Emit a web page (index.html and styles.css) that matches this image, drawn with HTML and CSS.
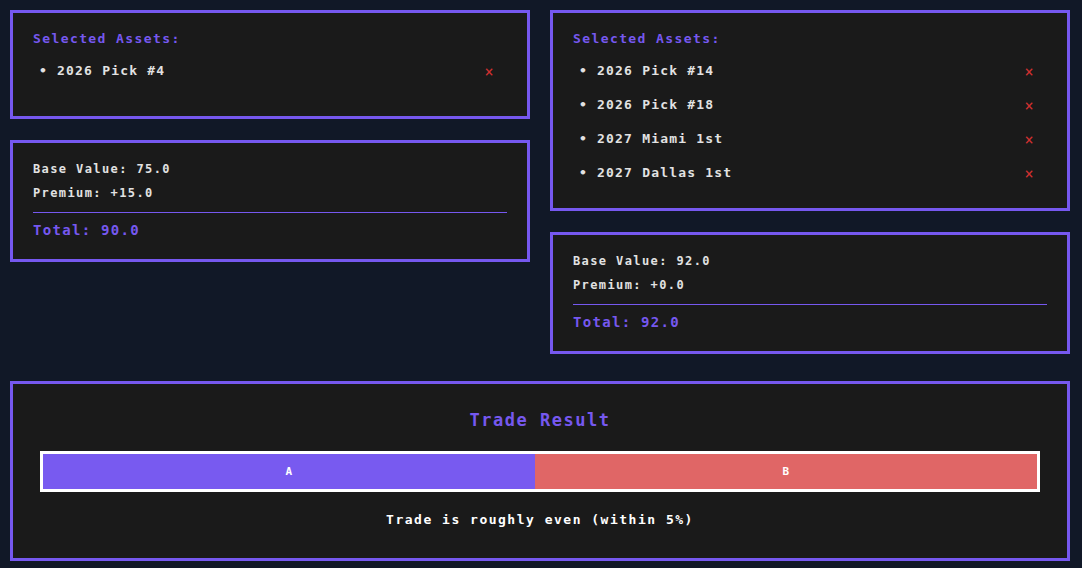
FILE: index.html
```
<!DOCTYPE html>
<html lang="en">
<head>
<meta charset="UTF-8" />
<meta name="viewport" content="width=device-width, initial-scale=1" />
<title>Trade Calculator</title>
<link rel="stylesheet" href="styles.css">
</head>
<body>

<div class="sides">
  <!-- Team A -->
  <div class="side">
    <div class="card assets">
      <div class="card-title">Selected Assets:</div>
      <ul class="asset-list">
        <li>2026 Pick #4<button class="remove">×</button></li>
      </ul>
    </div>
    <div class="card summary">
      <div class="line">Base Value: 75.0</div>
      <div class="line">Premium: +15.0</div>
      <div class="total">Total: 90.0</div>
    </div>
  </div>

  <!-- Team B -->
  <div class="side">
    <div class="card assets">
      <div class="card-title">Selected Assets:</div>
      <ul class="asset-list">
        <li>2026 Pick #14<button class="remove">×</button></li>
        <li>2026 Pick #18<button class="remove">×</button></li>
        <li>2027 Miami 1st<button class="remove">×</button></li>
        <li>2027 Dallas 1st<button class="remove">×</button></li>
      </ul>
    </div>
    <div class="card summary">
      <div class="line">Base Value: 92.0</div>
      <div class="line">Premium: +0.0</div>
      <div class="total">Total: 92.0</div>
    </div>
  </div>
</div>

<div class="card result">
  <div class="result-title">Trade Result</div>
  <div class="bar">
    <div class="bar-a" style="width: 49.45%">A</div>
    <div class="bar-b">B</div>
  </div>
  <div class="verdict">Trade is roughly even (within 5%)</div>
</div>

</body>
</html>
```

FILE: styles.css
```
body {
  background: #111827;
  color: #e2e2e2;
  font-family: 'DejaVu Sans Mono', 'Liberation Mono', monospace;
  font-weight: bold;
  margin: 0;
  padding: 10px 12px 10px 10px;
}
.sides {
  display: grid;
  grid-template-columns: 1fr 1fr;
  gap: 20px;
  align-items: start;
}
.side {
  display: flex;
  flex-direction: column;
  gap: 21px;
}
.card {
  background: #1a1a1a;
  border: 3px solid #7658ef;
  box-sizing: border-box;
}
.assets {
  min-height: 109px;
  padding: 14px 20px 19px;
}
.card-title {
  color: #7658ef;
  font-size: 13px;
  letter-spacing: 1.4px;
  line-height: 24px;
  margin-bottom: 2px;
}
.asset-list {
  list-style: none;
  margin: 0;
  padding: 0;
}
.asset-list li {
  display: flex;
  align-items: center;
  height: 34px;
  font-size: 13px;
  letter-spacing: 1.2px;
  padding-left: 6px;
  padding-right: 14px;
}
.asset-list li::before {
  content: '•';
  width: 18px;
  letter-spacing: 0;
}
.remove {
  margin-left: auto;
  background: none;
  border: none;
  padding: 5px 0 0;
  width: 8px;
  color: #d03030;
  font-family: inherit;
  font-size: 15px;
  font-weight: normal;
  line-height: 1;
  display: flex;
  justify-content: center;
  cursor: pointer;
}
.summary {
  padding: 14px 20px 17px;
}
.line {
  font-size: 12px;
  letter-spacing: 1.4px;
  line-height: 24px;
}
.total {
  color: #7658ef;
  font-size: 14px;
  letter-spacing: 1.3px;
  line-height: 24px;
  border-top: 1px solid #7658ef;
  margin-top: 7px;
  padding-top: 5px;
}
.result {
  margin-top: 27px;
  padding: 24px 27px 26px;
  text-align: center;
}
.result-title {
  color: #7658ef;
  font-size: 17px;
  letter-spacing: 1.5px;
  line-height: 24px;
}
.bar {
  display: flex;
  height: 35px;
  border: 3px solid #fff;
  margin-top: 19px;
  font-size: 11px;
  color: #fff;
}
.bar-a, .bar-b {
  display: flex;
  align-items: center;
  justify-content: center;
}
.bar-a {
  background: #785af0;
}
.bar-b {
  flex: 1;
  background: #e06666;
}
.verdict {
  color: #fff;
  font-size: 13px;
  letter-spacing: 1.5px;
  line-height: 24px;
  margin-top: 16px;
}
```
